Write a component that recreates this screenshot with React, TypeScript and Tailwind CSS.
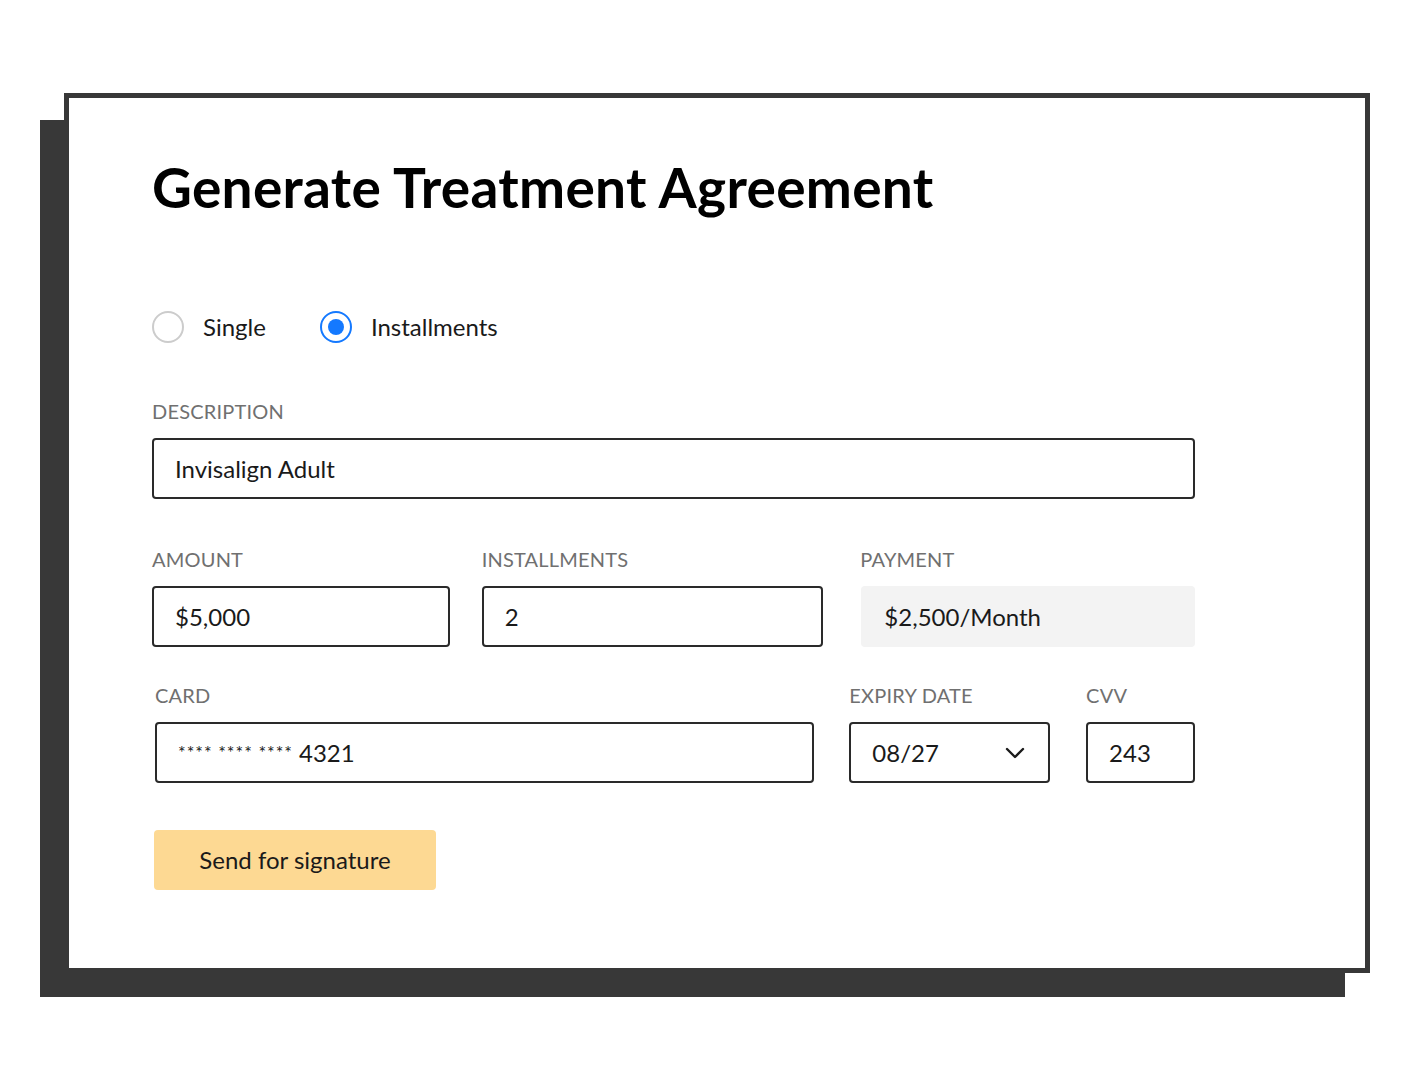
import React from "react";

const label = "text-[20px] text-[#707070] tracking-[0.2px] leading-none";
const input = "h-[61px] border-2 border-[#2a2a2a] rounded-[4px] flex items-center px-[21px] text-[24px] text-[#1a1a1a]";

export default function App() {
  return (
    <div className="w-[1410px] h-[1092px] bg-white" style={{ fontFamily: "Lato, 'Noto Sans', sans-serif" }}>
      <div className="relative ml-[64px] pt-[93px] w-[1306px]">
        <div className="absolute left-[-24px] top-[120px] w-[1305px] h-[877px] bg-[#383838]" />
        <div className="relative h-[880px] border-[5px] border-[#383838] bg-white pl-[83px] pr-[170px] pt-[62px]">
          <h1 className="text-[55px] font-bold text-black leading-none tracking-[0.3px]">Generate Treatment Agreement</h1>
          <div className="flex items-center mt-[94px] text-[24px] text-[#1a1a1a]">
            <span className="w-[32px] h-[32px] rounded-full border-2 border-[#cccccc]" />
            <span className="ml-[19px]">Single</span>
            <span className="ml-[54px] w-[32px] h-[32px] rounded-full border-2 border-[#1479ff] flex items-center justify-center">
              <span className="w-[16px] h-[16px] rounded-full bg-[#1479ff]" />
            </span>
            <span className="ml-[19px]">Installments</span>
          </div>
          <div className={`${label} mt-[56px]`}>DESCRIPTION</div>
          <div className={`${input} mt-[17px]`}>Invisalign Adult</div>
          <div className="flex mt-[50px]">
            <div className="w-[298px]">
              <div className={label}>AMOUNT</div>
              <div className={`${input} mt-[17px]`}>$5,000</div>
            </div>
            <div className="w-[342px] ml-[32px]">
              <div className={label}>INSTALLMENTS</div>
              <div className={`${input} mt-[17px]`}>2</div>
            </div>
            <div className="w-[334px] ml-[38px]">
              <div className={`${label} ml-[-1px]`}>PAYMENT</div>
              <div className="h-[61px] rounded-[4px] bg-[#f3f3f3] flex items-center px-[23px] text-[24px] text-[#1a1a1a] mt-[17px]">$2,500/Month</div>
            </div>
          </div>
          <div className="flex mt-[38px]">
            <div className="w-[660px] ml-[3px]">
              <div className={label}>CARD</div>
              <div className={`${input} mt-[17px]`}><span className="text-[18px] mr-[6px] tracking-[1px]">**** **** ****</span>4321</div>
            </div>
            <div className="w-[201px] ml-[35px]">
              <div className={label}>EXPIRY DATE</div>
              <div className={`${input} mt-[17px] justify-between pr-[22px]`}>
                08/27
                <svg width="22" height="14" viewBox="0 0 22 14" fill="none"><path d="M3 3l8 8 8-8" stroke="#1a1a1a" strokeWidth="2.4" strokeLinecap="round" strokeLinejoin="round" /></svg>
              </div>
            </div>
            <div className="w-[109px] ml-[36px]">
              <div className={label}>CVV</div>
              <div className={`${input} mt-[17px]`}>243</div>
            </div>
          </div>
          <button className="mt-[47px] ml-[2px] w-[282px] h-[60px] rounded-[4px] bg-[#fdd993] text-[24px] text-[#1a1a1a]">Send for signature</button>
        </div>
      </div>
    </div>
  );
}
